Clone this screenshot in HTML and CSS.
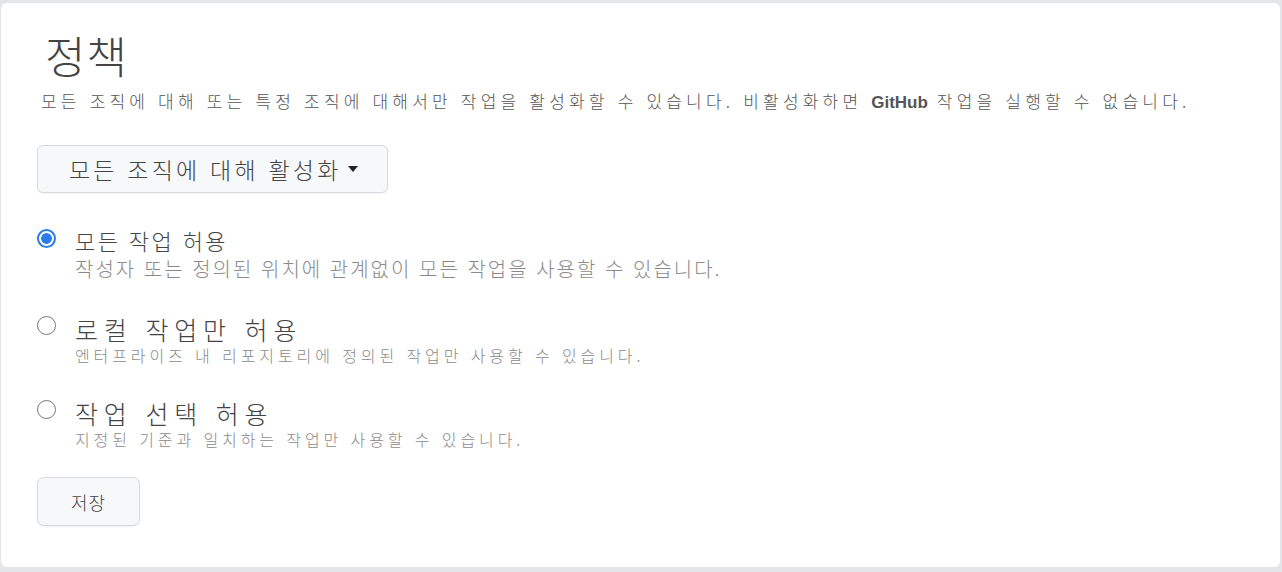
FILE: index.html
```html
<!DOCTYPE html>
<html lang="ko">
<head>
<meta charset="utf-8">
<link rel="stylesheet" href="styles.css">
</head>
<body>
<div class="card">
  <h1 class="title">정책</h1>
  <p class="lead">모든 조직에 대해 또는 특정 조직에 대해서만 작업을 활성화할 수 있습니다. 비활성화하면 <span class="latin">GitHub</span> 작업을 실행할 수 없습니다.</p>
  <button class="dropdown">모든 조직에 대해 활성화<span class="caret"></span></button>
  <div class="options">
    <label class="option first">
      <span class="radio checked"></span>
      <span class="texts">
        <span class="label small">모든 작업 허용</span>
        <span class="desc">작성자 또는 정의된 위치에 관계없이 모든 작업을 사용할 수 있습니다.</span>
      </span>
    </label>
    <label class="option">
      <span class="radio"></span>
      <span class="texts">
        <span class="label big">로컬 작업만 허용</span>
        <span class="desc tight">엔터프라이즈 내 리포지토리에 정의된 작업만 사용할 수 있습니다.</span>
      </span>
    </label>
    <label class="option">
      <span class="radio"></span>
      <span class="texts">
        <span class="label big">작업 선택 허용</span>
        <span class="desc tight">지정된 기준과 일치하는 작업만 사용할 수 있습니다.</span>
      </span>
    </label>
  </div>
  <button class="save">저장</button>
</div>
</body>
</html>
```

FILE: styles.css
```css
html, body {
  margin: 0;
  padding: 0;
  background: #e3e5e9;
}
body {
  padding: 3px 2px 5px 1px;
  font-family: "Noto Sans CJK KR", "Noto Sans", sans-serif;
  color: #555;
}
.card {
  background: #fff;
  border-radius: 6px;
  height: 564px;
  box-sizing: border-box;
  padding: 25px 36px 0 40px;
}
.title {
  margin: 0 0 0 4px;
  font-size: 44px;
  font-weight: 300;
  line-height: 54px;
  color: #444;
  letter-spacing: 1px;
}
.lead {
  margin: 7px 0 0 0;
  height: 24px;
  font-size: 17px;
  font-weight: 300;
  line-height: 24px;
  letter-spacing: 4.2px;
  color: #555;
  white-space: nowrap;
}
.latin {
  font-family: "Liberation Sans", Arial, sans-serif;
  font-weight: 700;
  letter-spacing: 0;
  line-height: 1;
  color: #555;
}
.dropdown {
  margin: 32px 0 0 -4px;
  display: flex;
  align-items: center;
  height: 48px;
  width: 351px;
  padding: 0 0 0 31px;
  border: 1px solid #d6d9dd;
  border-radius: 6px;
  background: #f6f8fa;
  box-shadow: 0 1px 1px rgba(0,0,0,0.04);
  font-family: inherit;
  font-size: 23px;
  font-weight: 300;
  letter-spacing: 3.2px;
  color: #444;
  white-space: nowrap;
}
.caret {
  margin-left: 6px;
  width: 0;
  height: 0;
  border-left: 5px solid transparent;
  border-right: 5px solid transparent;
  border-top: 6px solid #222;
}
.options {
  margin-top: 35px;
  margin-left: -4px;
  display: flex;
  flex-direction: column;
}
.option {
  display: flex;
  align-items: flex-start;
}
.option + .option {
  margin-top: 33px;
}
.radio {
  flex: none;
  width: 19px;
  height: 19px;
  border: 1.5px solid #777;
  border-radius: 50%;
  box-sizing: border-box;
  margin: 1.5px 19px 0 0;
}
.radio.checked {
  margin-top: 1px;
  border: 2px solid #2b7de9;
  background: radial-gradient(circle, #2b7de9 0 5px, #fff 5.6px);
}
.texts {
  display: flex;
  flex-direction: column;
}
.label {
  color: #444;
  font-weight: 300;
  white-space: nowrap;
}
.label.small {
  font-size: 22px;
  line-height: 24px;
  letter-spacing: 2.4px;
}
.label.big {
  font-size: 25px;
  line-height: 30px;
  letter-spacing: 5.8px;
}
.desc {
  color: #8a8a8a;
  font-weight: 300;
  font-size: 20px;
  line-height: 24px;
  margin-top: 5px;
  letter-spacing: 2px;
  white-space: nowrap;
}
.desc.tight {
  font-size: 16px;
  line-height: 20px;
  margin-top: 1px;
  letter-spacing: 3.9px;
}
.save {
  margin: 28px 0 0 -4px;
  width: 103px;
  height: 49px;
  border: 1px solid #d6d9dd;
  border-radius: 7px;
  background: #f6f8fa;
  box-shadow: 0 1px 2px rgba(0,0,0,0.06);
  font-family: inherit;
  font-size: 18px;
  font-weight: 300;
  color: #444;
  letter-spacing: 1px;
}
```
